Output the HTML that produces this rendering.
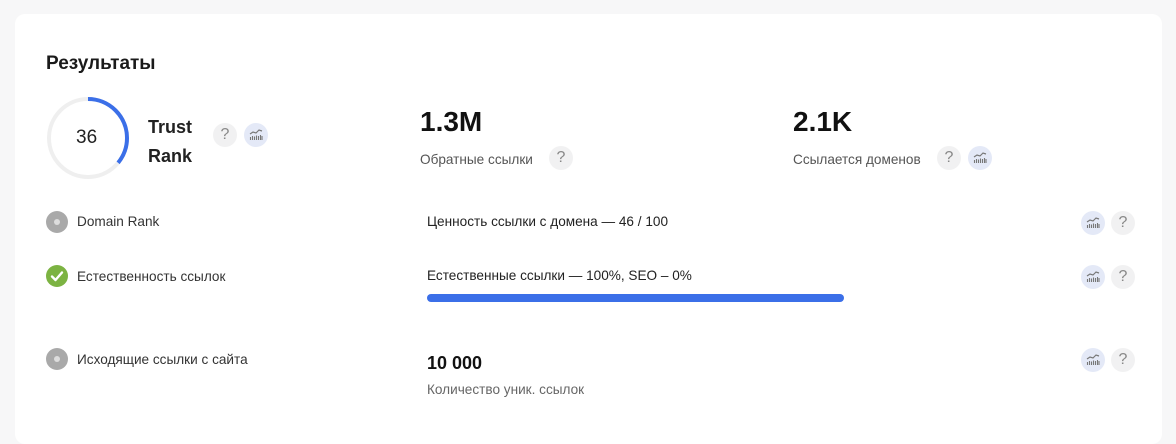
<!DOCTYPE html>
<html><head><meta charset="utf-8"><style>
*{margin:0;padding:0;box-sizing:border-box}
body{width:1176px;height:427px;background:#f7f7f8;font-family:"Liberation Sans",Arial,sans-serif;color:#222;position:relative;overflow:hidden}
.card{position:absolute;left:15px;top:14px;width:1147px;height:430px;background:#fff;border-radius:10px}
.a{position:absolute;white-space:nowrap}
.q{position:absolute;width:24px;height:24px;border-radius:50%;background:#f1f1f2;color:#888;font-size:16px;text-align:center;line-height:24px}
.c{position:absolute;width:24px;height:24px;border-radius:50%;background:#e4e9f7}
.c svg{position:absolute;left:5px;top:6px}
.dot{position:absolute;width:22px;height:22px;border-radius:50%;background:#a9a9a9}
.dot:after{content:"";position:absolute;left:8px;top:8px;width:6px;height:6px;border-radius:50%;background:#ddd}
.lbl{font-size:13.6px;color:#333}
</style></head><body>
<div class="card"></div>
<div class="a" style="left:46px;top:53px;font-size:19px;font-weight:bold;color:#1a1a1a">Результаты</div>
<svg class="a" style="left:45px;top:95px" width="86" height="86"><circle cx="43" cy="43" r="39" fill="none" stroke="#efefef" stroke-width="4"/><circle cx="43" cy="43" r="39" fill="none" stroke="#3b6fe8" stroke-width="4" stroke-dasharray="88 300" transform="rotate(-90 43 43)"/></svg>
<div class="a" style="left:76px;top:127px;font-size:19px;color:#222">36</div>
<div class="a" style="left:148px;top:113px;font-size:18px;font-weight:bold;line-height:29px">Trust<br>Rank</div>
<div class="q" style="left:213px;top:123px">?</div>
<div class="c" style="left:244px;top:123px"><svg width="14" height="12" viewBox="0 0 14 12"><path d="M1 5 L4 3 L7 4 L10 1 L13 2" fill="none" stroke="#777" stroke-width="1.2"/><path d="M1.5 11V8M3.5 11V7M5.5 11V7.5M7.5 11V6.5M9.5 11V7M11.5 11V6M13 11V7" stroke="#777" stroke-width="1.1"/></svg></div>
<div class="a" style="left:420px;top:106px;font-size:28px;font-weight:bold;color:#111">1.3M</div>
<div class="a lbl" style="left:420px;top:152px;color:#555">Обратные ссылки</div>
<div class="q" style="left:549px;top:146px">?</div>
<div class="a" style="left:793px;top:106px;font-size:28px;font-weight:bold;color:#111">2.1K</div>
<div class="a lbl" style="left:793px;top:152px;color:#555">Ссылается доменов</div>
<div class="q" style="left:937px;top:146px">?</div>
<div class="c" style="left:968px;top:146px"><svg width="14" height="12" viewBox="0 0 14 12"><path d="M1 5 L4 3 L7 4 L10 1 L13 2" fill="none" stroke="#777" stroke-width="1.2"/><path d="M1.5 11V8M3.5 11V7M5.5 11V7.5M7.5 11V6.5M9.5 11V7M11.5 11V6M13 11V7" stroke="#777" stroke-width="1.1"/></svg></div>

<div class="dot" style="left:46px;top:211px"></div>
<div class="a lbl" style="left:77px;top:214px">Domain Rank</div>
<div class="a lbl" style="left:427px;top:214px;color:#222">Ценность ссылки с домена — 46 / 100</div>

<div class="a" style="left:46px;top:265px;width:22px;height:22px;border-radius:50%;background:#7cb342"><svg width="22" height="22"><path d="M6 11.5 L9.5 15 L16 7.5" fill="none" stroke="#fff" stroke-width="2.4" stroke-linecap="round" stroke-linejoin="round"/></svg></div>
<div class="a lbl" style="left:77px;top:269px">Естественность ссылок</div>
<div class="a lbl" style="left:427px;top:268px;color:#222">Естественные ссылки — 100%, SEO – 0%</div>
<div class="a" style="left:427px;top:294px;width:417px;height:8px;border-radius:4px;background:#3b6fe8"></div>

<div class="dot" style="left:46px;top:348px"></div>
<div class="a lbl" style="left:77px;top:352px">Исходящие ссылки с сайта</div>
<div class="a" style="left:427px;top:353px;font-size:18px;font-weight:bold;color:#111">10 000</div>
<div class="a lbl" style="left:427px;top:382px;color:#666">Количество уник. ссылок</div>

<div class="c" style="left:1081px;top:211px"><svg width="14" height="12" viewBox="0 0 14 12"><path d="M1 5 L4 3 L7 4 L10 1 L13 2" fill="none" stroke="#777" stroke-width="1.2"/><path d="M1.5 11V8M3.5 11V7M5.5 11V7.5M7.5 11V6.5M9.5 11V7M11.5 11V6M13 11V7" stroke="#777" stroke-width="1.1"/></svg></div>
<div class="q" style="left:1111px;top:211px">?</div>
<div class="c" style="left:1081px;top:265px"><svg width="14" height="12" viewBox="0 0 14 12"><path d="M1 5 L4 3 L7 4 L10 1 L13 2" fill="none" stroke="#777" stroke-width="1.2"/><path d="M1.5 11V8M3.5 11V7M5.5 11V7.5M7.5 11V6.5M9.5 11V7M11.5 11V6M13 11V7" stroke="#777" stroke-width="1.1"/></svg></div>
<div class="q" style="left:1111px;top:265px">?</div>
<div class="c" style="left:1081px;top:348px"><svg width="14" height="12" viewBox="0 0 14 12"><path d="M1 5 L4 3 L7 4 L10 1 L13 2" fill="none" stroke="#777" stroke-width="1.2"/><path d="M1.5 11V8M3.5 11V7M5.5 11V7.5M7.5 11V6.5M9.5 11V7M11.5 11V6M13 11V7" stroke="#777" stroke-width="1.1"/></svg></div>
<div class="q" style="left:1111px;top:348px">?</div>
</body></html>
